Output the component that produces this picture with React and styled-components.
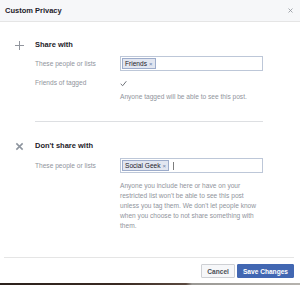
import React from 'react'
import styled, { createGlobalStyle } from 'styled-components';

const GlobalStyle = createGlobalStyle`
    html, body {
        margin:0;
        padding:0;
        width:300px;
        height:285px;
        overflow:hidden;
        background:#ffffff;
        font-family:"Liberation Sans", Arial, sans-serif;
    }
`;

const Page = styled.div`
    width:300px;
    height:285px;
    display:flex;
    flex-direction:column;
`;

const Dialog = styled.div`
    height:283px;
    background:#ffffff;
    display:flex;
    flex-direction:column;
`;

const Backdrop = styled.div`
    flex:1;
    background:linear-gradient(90deg, #2b211c 0%, #3a2a22 40%, #5b4a40 62%, #9a9894 64%, #b6b3ae 100%);
`;

const Header = styled.div`
    height:21px;
    flex:none;
    display:flex;
    align-items:center;
    justify-content:space-between;
    padding:0 7px 0 5px;
    background:#f6f7f9;
    border-bottom:1px solid #e5e5e5;
    h1{
        margin:0;
        font-size:7.5px;
        font-weight:bold;
        color:#1d2129;
    }
`;

const Close = styled.svg`
    width:5px;
    height:5px;
`;

const Body = styled.div`
    flex:1;
    display:flex;
    flex-direction:column;
    padding-top:18px;
`;

const Section = styled.div`
    display:grid;
    grid-template-columns:35px 85px 143px;
    align-items:center;
`;

const Icon = styled.div`
    display:flex;
    justify-content:center;
    padding-left:3px;
    svg{
        width:9px;
        height:9px;
    }
`;

const Heading = styled.div`
    font-size:7.5px;
    line-height:10px;
    font-weight:bold;
    color:#1d2129;
`;

const Label = styled.div`
    grid-column:2;
    font-size:6.6px;
    line-height:10px;
    color:#90949c;
    margin-top:${p => p.$top || 0}px;
`;

const Field = styled.div`
    grid-column:3;
    height:15px;
    box-sizing:border-box;
    border:1px solid #bdc7d8;
    display:flex;
    align-items:center;
    gap:4px;
    padding-left:1px;
    margin-top:${p => p.$top || 0}px;
`;

const Token = styled.span`
    height:11px;
    box-sizing:border-box;
    display:inline-flex;
    align-items:center;
    gap:2px;
    padding:0 2px;
    background:#e2e6f0;
    border:1px solid #9daccb;
    font-size:6.6px;
    color:#1d2129;
    i{
        font-style:normal;
        font-size:6px;
        color:#6b7fa8;
    }
`;

const Caret = styled.span`
    width:1px;
    height:8px;
    background:#7d7d7d;
`;

const Check = styled.div`
    grid-column:3;
    margin-top:${p => p.$top || 0}px;
    height:10px;
    display:flex;
    align-items:center;
    svg{
        width:7px;
        height:7px;
    }
`;

const Help = styled.div`
    grid-column:3;
    font-size:6.6px;
    line-height:10px;
    color:#90949c;
    margin-top:${p => p.$top || 0}px;
`;

const Divider = styled.hr`
    margin:19px 37px 19px 35px;
    border:0;
    border-top:1px solid #dddfe2;
`;

const Footer = styled.div`
    margin:26px 6px 0 4px;
    padding-top:6px;
    border-top:1px solid #e5e5e5;
    display:flex;
    justify-content:flex-end;
    gap:2px;
`;

const Button = styled.button`
    height:14px;
    box-sizing:border-box;
    padding:0 5px;
    font-family:"Liberation Sans", Arial, sans-serif;
    font-size:6.6px;
    font-weight:bold;
    border-radius:1px;
    border:1px solid ${p => p.$primary ? '#4267b2' : '#ced0d4'};
    background:${p => p.$primary ? '#4267b2' : '#f6f7f9'};
    color:${p => p.$primary ? '#ffffff' : '#4b4f56'};
`;

const App = () => {
  return (
    <Page>
        <GlobalStyle />
        <Dialog>
            <Header>
                <h1>Custom Privacy</h1>
                <Close viewBox="0 0 10 10">
                    <path d="M1 1 L9 9 M9 1 L1 9" stroke="#90949c" strokeWidth="1.6" />
                </Close>
            </Header>
            <Body>
                <Section>
                    <Icon>
                        <svg viewBox="0 0 10 10">
                            <path d="M5 0 V10 M0 5 H10" stroke="#90949c" strokeWidth="1.1" />
                        </svg>
                    </Icon>
                    <Heading>Share with</Heading>
                    <span />
                    <Label $top={6}>These people or lists</Label>
                    <Field $top={6}>
                        <Token>Friends<i>×</i></Token>
                    </Field>
                    <Label $top={7}>Friends of tagged</Label>
                    <Check $top={7}>
                        <svg viewBox="0 0 10 10">
                            <path d="M1 5.5 L3.8 8.2 L9 1.8" fill="none" stroke="#6b6f76" strokeWidth="1.4" />
                        </svg>
                    </Check>
                    <Help $top={4}>Anyone tagged will be able to see this post.</Help>
                </Section>
                <Divider />
                <Section>
                    <Icon>
                        <svg viewBox="0 0 10 10">
                            <path d="M1.5 1.5 L8.5 8.5 M8.5 1.5 L1.5 8.5" stroke="#8d949e" strokeWidth="1.7" />
                        </svg>
                    </Icon>
                    <Heading>Don't share with</Heading>
                    <span />
                    <Label $top={7}>These people or lists</Label>
                    <Field $top={7}>
                        <Token>Social Geek<i>×</i></Token>
                        <Caret />
                    </Field>
                    <Help $top={8}>
                        Anyone you include here or have on your restricted list won't be able to see this post unless you tag them. We don't let people know when you choose to not share something with them.
                    </Help>
                </Section>
                <Footer>
                    <Button>Cancel</Button>
                    <Button $primary>Save Changes</Button>
                </Footer>
            </Body>
        </Dialog>
        <Backdrop />
    </Page>
  )
}

export default App
